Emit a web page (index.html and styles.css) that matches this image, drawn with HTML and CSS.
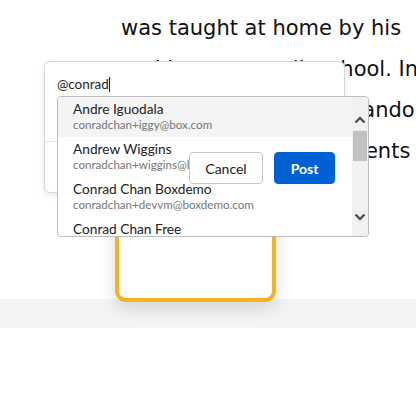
FILE: index.html
```html
<!DOCTYPE html>
<html>
<head>
<meta charset="utf-8">
<link rel="stylesheet" href="styles.css">
</head>
<body>
<div class="page">
  <div class="article">
    <div class="line">was taught at home by his</div>
    <div class="line">and later, a small, school. In</div>
    <div class="line">and so, in later life expando</div>
    <div class="line">and, did many experiments</div>
  </div>
  <div class="band"></div>

  <div class="highlight"></div>

  <div class="comment">
    <div class="input"><span class="typed">@conrad</span><span class="caret"></span></div>
    <div class="footer">
      <button class="btn cancel">Cancel</button>
      <button class="btn post">Post</button>
    </div>
  </div>

  <div class="dropdown">
    <div class="list">
      <div class="item active">
        <div class="name">Andre Iguodala</div>
        <div class="email">conradchan+iggy@box.com</div>
      </div>
      <div class="item">
        <div class="name">Andrew Wiggins</div>
        <div class="email">conradchan+wiggins@box.com</div>
      </div>
      <div class="item">
        <div class="name">Conrad Chan Boxdemo</div>
        <div class="email">conradchan+devvm@boxdemo.com</div>
      </div>
      <div class="item">
        <div class="name">Conrad Chan Free</div>
        <div class="email">conradchan+free@box.com</div>
      </div>
    </div>
    <div class="scrollbar">
      <svg class="arrow up" width="12" height="8" viewBox="0 0 12 8"><path d="M1.5 6.5 L6 2 L10.5 6.5" fill="none" stroke="#505050" stroke-width="2.4"/></svg>
      <div class="thumb"></div>
      <svg class="arrow down" width="12" height="8" viewBox="0 0 12 8"><path d="M1.5 1.5 L6 6 L10.5 1.5" fill="none" stroke="#505050" stroke-width="2.4"/></svg>
    </div>
  </div>
</div>
</body>
</html>
```
FILE: styles.css
```css
html, body {
  margin: 0;
  padding: 0;
  background: #fff;
}
.page {
  position: relative;
  width: 416px;
  height: 407px;
  overflow: hidden;
}
.article {
  height: 299px;
  padding: 8px 0 0 121px;
  box-sizing: border-box;
  font-family: "DejaVu Sans", "Noto Sans CJK KR", sans-serif;
  font-size: 21px;
  line-height: 41px;
  color: #111;
}
.line {
  white-space: nowrap;
}
.band {
  height: 29px;
  background: #f4f4f4;
}
.highlight {
  position: absolute;
  left: 115px;
  top: 150px;
  width: 161px;
  height: 152px;
  box-sizing: border-box;
  border: 4px solid #f5b324;
  border-radius: 11px;
  background: #fff;
  box-shadow: 0 6px 18px rgba(0,0,0,0.14);
}
.comment {
  position: absolute;
  left: 44px;
  top: 61px;
  width: 301px;
  height: 132px;
  box-sizing: border-box;
  background: #fff;
  border: 1px solid #d6d6d6;
  border-radius: 6px;
  box-shadow: 0 2px 6px rgba(0,0,0,0.10);
  font-family: Lato, sans-serif;
  display: flex;
  flex-direction: column;
}
.input {
  height: 80px;
  box-sizing: border-box;
  padding: 13px 0 0 12px;
  font-size: 13.5px;
  line-height: 18px;
  color: #222;
  border-bottom: 1px solid #e4e4e4;
  display: flex;
  align-items: flex-start;
}
.caret {
  display: inline-block;
  width: 1px;
  height: 15px;
  margin-top: 2px;
  background: #222;
}
.footer {
  position: relative;
  z-index: 3;
  display: flex;
  justify-content: flex-end;
  gap: 11px;
  padding: 10px 9px 0 0;
}
.btn {
  font-family: Lato, sans-serif;
  font-size: 14px;
  height: 32px;
  border-radius: 4px;
  padding: 0;
  cursor: pointer;
}
.cancel {
  width: 74px;
  background: #fff;
  border: 1px solid #c8c8c8;
  color: #222;
}
.post {
  width: 61px;
  background: #0061d5;
  border: 1px solid #0061d5;
  color: #fff;
  font-weight: 700;
}
.dropdown {
  position: absolute;
  z-index: 2;
  left: 57px;
  top: 96px;
  width: 312px;
  height: 141px;
  box-sizing: border-box;
  background: #fff;
  border: 1px solid #bdbdbd;
  border-radius: 4px;
  overflow: hidden;
  display: flex;
  font-family: Lato, sans-serif;
}
.list {
  flex: 1;
  overflow: hidden;
}
.item {
  height: 40px;
  box-sizing: border-box;
  padding: 4px 0 0 15px;
  white-space: nowrap;
}
.item.active {
  background: #f4f4f4;
}
.name {
  font-size: 13.7px;
  line-height: 16px;
  color: #222;
}
.email {
  font-size: 11.6px;
  line-height: 16px;
  color: #767676;
}
.scrollbar {
  width: 16px;
  flex: none;
  background: #f1f1f1;
  display: flex;
  flex-direction: column;
  align-items: center;
}
.arrow.up {
  margin-top: 19px;
}
.thumb {
  width: 14px;
  height: 30px;
  margin-top: 7px;
  background: #c1c1c1;
}
.arrow.down {
  margin-top: 52px;
}
```
